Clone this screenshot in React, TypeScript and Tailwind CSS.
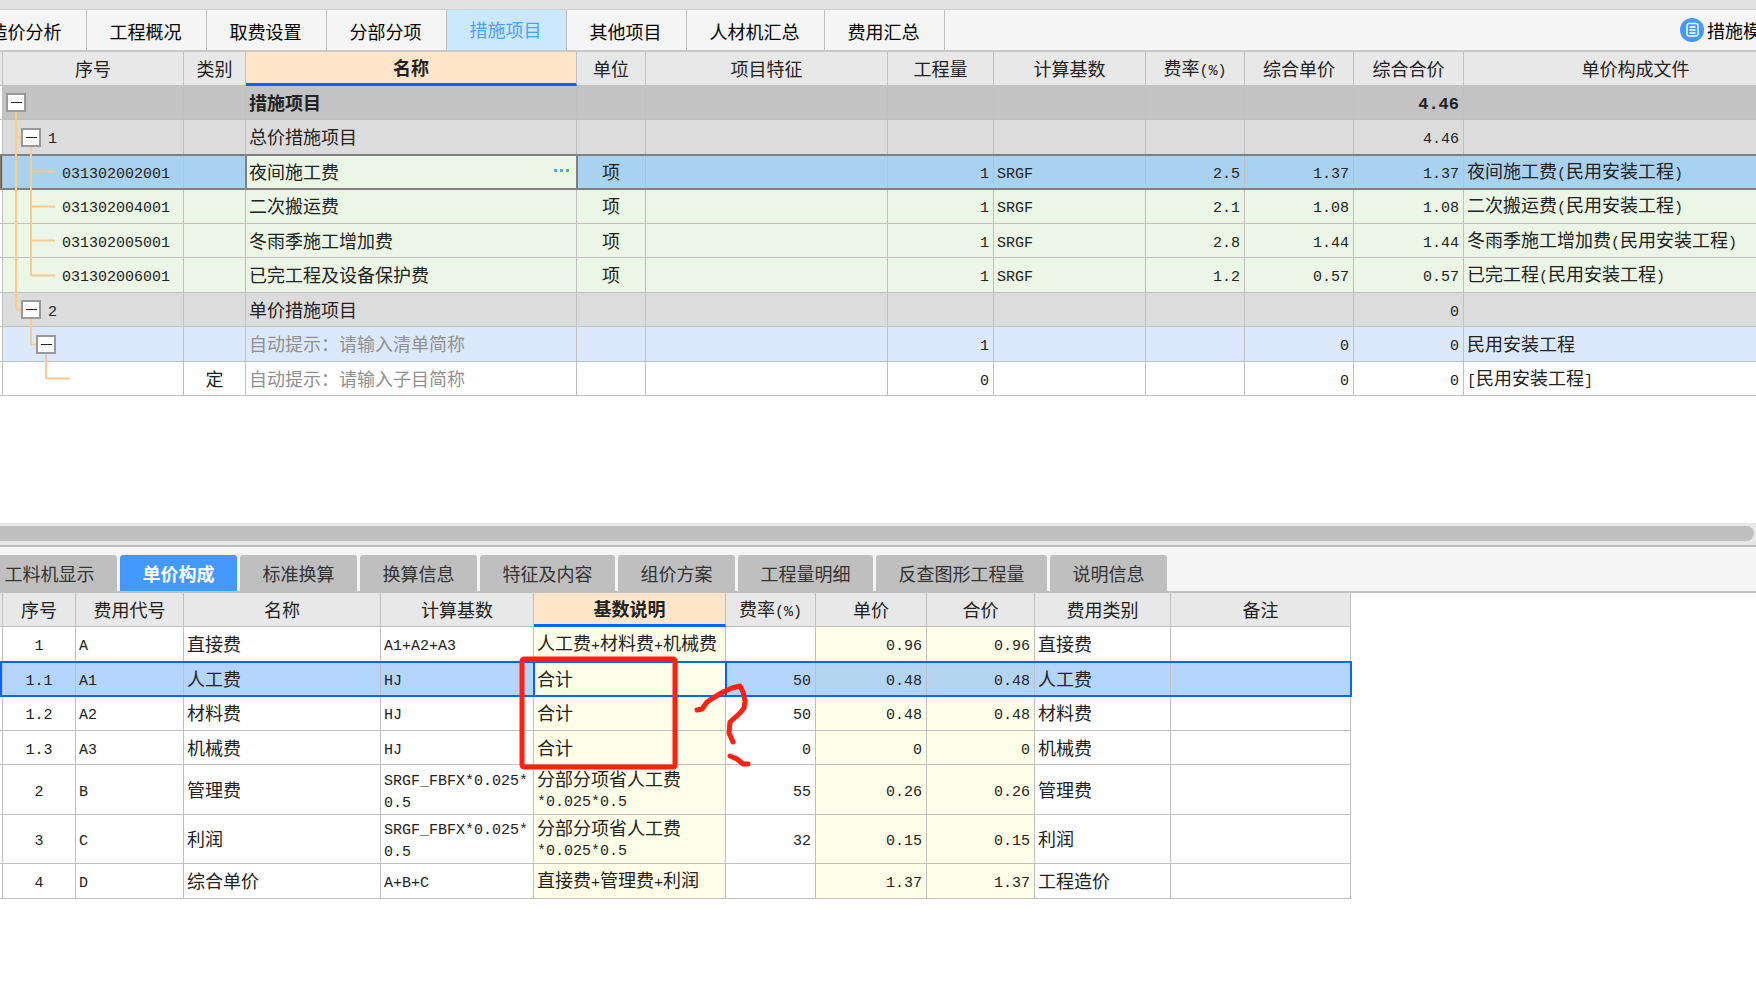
import { useState } from 'react';
import { clsx } from 'clsx';

type Line = { x: number; from: string; to: string };

type TreeSpec = {
    lines?: Line[];
    branch?: [number, number];
    box?: string;
    label?: string;
    pad?: string;
};

type MeasureRow = {
    tree: TreeSpec;
    kind?: string;
    name: string;
    hint?: boolean;
    unit?: string;
    qty?: string;
    base?: string;
    rate?: string;
    price?: string;
    total?: string;
    file?: string;
    tone: string;
    selected?: boolean;
    bold?: boolean;
};

type CostRow = {
    no: string;
    code: string;
    name: string;
    base: string;
    note: string;
    rate: string;
    price: string;
    total: string;
    type: string;
    height: string;
    selected?: boolean;
};

const MAIN_TABS = ['造价分析', '工程概况', '取费设置', '分部分项', '措施项目', '其他项目', '人材机汇总', '费用汇总'];
const DETAIL_TABS = ['工料机显示', '单价构成', '标准换算', '换算信息', '特征及内容', '组价方案', '工程量明细', '反查图形工程量', '说明信息'];

const MEASURE_COLS = [
    { title: '', width: 'w-[3px]' },
    { title: '序号', width: 'w-[181px]' },
    { title: '类别', width: 'w-[62px]' },
    { title: '名称', width: 'w-[331px]' },
    { title: '单位', width: 'w-[69px]' },
    { title: '项目特征', width: 'w-[242px]' },
    { title: '工程量', width: 'w-[106px]' },
    { title: '计算基数', width: 'w-[152px]' },
    { title: '费率(%)', width: 'w-[99px]' },
    { title: '综合单价', width: 'w-[109px]' },
    { title: '综合合价', width: 'w-[110px]' },
    { title: '单价构成文件', width: 'w-[344px]' },
];

const COST_COLS = [
    { title: '', width: 'w-[3px]' },
    { title: '序号', width: 'w-[73px]' },
    { title: '费用代号', width: 'w-[108px]' },
    { title: '名称', width: 'w-[197px]' },
    { title: '计算基数', width: 'w-[153px]' },
    { title: '基数说明', width: 'w-[192px]' },
    { title: '费率(%)', width: 'w-[90px]' },
    { title: '单价', width: 'w-[111px]' },
    { title: '合价', width: 'w-[108px]' },
    { title: '费用类别', width: 'w-[136px]' },
    { title: '备注', width: 'w-[180px]' },
];

const full = (x: number): Line => ({ x, from: '0%', to: '100%' });
const top = (x: number): Line => ({ x, from: '0%', to: '50%' });
const bottom = (x: number): Line => ({ x, from: '50%', to: '100%' });

const MEASURES: MeasureRow[] = [
    { tree: { lines: [bottom(13)], box: 'ml-[3px]' }, name: '措施项目', total: '4.46', tone: 'bg-[#c3c3c3]', bold: true },
    { tree: { lines: [full(13), bottom(28)], branch: [13, 20], box: 'ml-[18px]', label: '1' }, name: '总价措施项目', total: '4.46', tone: 'bg-[#dcdcdc]' },
    { tree: { lines: [full(13), full(28)], branch: [28, 52], label: '031302002001', pad: 'pl-[59px]' }, name: '夜间施工费', unit: '项', qty: '1', base: 'SRGF', rate: '2.5', price: '1.37', total: '1.37', file: '夜间施工费(民用安装工程)', tone: 'bg-[#a9d2f0]', selected: true },
    { tree: { lines: [full(13), full(28)], branch: [28, 52], label: '031302004001', pad: 'pl-[59px]' }, name: '二次搬运费', unit: '项', qty: '1', base: 'SRGF', rate: '2.1', price: '1.08', total: '1.08', file: '二次搬运费(民用安装工程)', tone: 'bg-[#ebf6e6]' },
    { tree: { lines: [full(13), full(28)], branch: [28, 52], label: '031302005001', pad: 'pl-[59px]' }, name: '冬雨季施工增加费', unit: '项', qty: '1', base: 'SRGF', rate: '2.8', price: '1.44', total: '1.44', file: '冬雨季施工增加费(民用安装工程)', tone: 'bg-[#ebf6e6]' },
    { tree: { lines: [full(13), top(28)], branch: [28, 52], label: '031302006001', pad: 'pl-[59px]' }, name: '已完工程及设备保护费', unit: '项', qty: '1', base: 'SRGF', rate: '1.2', price: '0.57', total: '0.57', file: '已完工程(民用安装工程)', tone: 'bg-[#ebf6e6]' },
    { tree: { lines: [top(13), bottom(28)], branch: [13, 20], box: 'ml-[18px]', label: '2' }, name: '单价措施项目', total: '0', tone: 'bg-[#dcdcdc]' },
    { tree: { lines: [top(28), bottom(43)], branch: [28, 35], box: 'ml-[33px]' }, name: '自动提示：请输入清单简称', hint: true, qty: '1', price: '0', total: '0', file: '民用安装工程', tone: 'bg-[#dce9fd]' },
    { tree: { lines: [top(43)], branch: [43, 67] }, kind: '定', name: '自动提示：请输入子目简称', hint: true, qty: '0', price: '0', total: '0', file: '[民用安装工程]', tone: 'bg-white' },
];

const COSTS: CostRow[] = [
    { no: '1', code: 'A', name: '直接费', base: 'A1+A2+A3', note: '人工费+材料费+机械费', rate: '', price: '0.96', total: '0.96', type: '直接费', height: 'h-[35px]' },
    { no: '1.1', code: 'A1', name: '人工费', base: 'HJ', note: '合计', rate: '50', price: '0.48', total: '0.48', type: '人工费', height: 'h-[34px]', selected: true },
    { no: '1.2', code: 'A2', name: '材料费', base: 'HJ', note: '合计', rate: '50', price: '0.48', total: '0.48', type: '材料费', height: 'h-[35px]' },
    { no: '1.3', code: 'A3', name: '机械费', base: 'HJ', note: '合计', rate: '0', price: '0', total: '0', type: '机械费', height: 'h-[34px]' },
    { no: '2', code: 'B', name: '管理费', base: 'SRGF_FBFX*0.025*\n0.5', note: '分部分项省人工费\n*0.025*0.5', rate: '55', price: '0.26', total: '0.26', type: '管理费', height: 'h-[50px]' },
    { no: '3', code: 'C', name: '利润', base: 'SRGF_FBFX*0.025*\n0.5', note: '分部分项省人工费\n*0.025*0.5', rate: '32', price: '0.15', total: '0.15', type: '利润', height: 'h-[49px]' },
    { no: '4', code: 'D', name: '综合单价', base: 'A+B+C', note: '直接费+管理费+利润', rate: '', price: '1.37', total: '1.37', type: '工程造价', height: 'h-[35px]' },
];

// Half-width characters take exactly half of a full-width one
function Mixed({ text, large }: { text: string; large?: boolean }) {
    const parts = text.split(/([\x20-\x7e]+)/).filter(Boolean);
    return (
        <>
            {parts.map((part, i) =>
                /^[\x20-\x7e]/.test(part) ? (
                    <span
                        key={i}
                        className={clsx("font-['Liberation_Mono',monospace] leading-none", large ? 'text-[17px]' : 'text-[15px]')}
                    >
                        {part}
                    </span>
                ) : (
                    <span key={i}>{part}</span>
                )
            )}
        </>
    );
}

function TreeCell({ tree }: { tree: TreeSpec }) {
    return (
        <div className={clsx('relative flex h-[33px] items-center', tree.pad)}>
            <svg className="absolute inset-x-0 -top-px h-[35px] w-full" stroke="#fbcb8b" strokeWidth="2" aria-hidden="true">
                {tree.lines?.map((l) => (
                    <line key={l.x} x1={l.x} x2={l.x} y1={l.from} y2={l.to} />
                ))}
                {tree.branch && <line x1={tree.branch[0]} x2={tree.branch[1]} y1="50%" y2="50%" />}
            </svg>
            {tree.box && (
                <button
                    aria-label="折叠"
                    className={clsx('relative flex h-[19px] w-5 items-center justify-center border-2 border-[#999] bg-white', tree.box)}
                >
                    <span className="h-px w-[11px] bg-[#222]" />
                </button>
            )}
            {tree.label && (
                <span className={clsx('relative pb-[2px]', tree.box && 'ml-[7px]')}>
                    <Mixed text={tree.label} />
                </span>
            )}
        </div>
    );
}

function HeadRow({ cols, active }: { cols: { title: string; width: string }[]; active: string }) {
    return (
        <tr className="h-[34px]">
            {cols.map((col, i) => (
                <th
                    key={i}
                    className={clsx(
                        'border-r border-[#c0c0c0] px-0 pt-0 pb-[2px] text-center',
                        col.width,
                        col.title === active
                            ? 'border-b-[3px] border-b-[#0066ff] bg-[#ffe6c8] font-bold'
                            : 'border-b bg-[#e8e8e8] font-normal'
                    )}
                >
                    <Mixed text={col.title} />
                </th>
            ))}
        </tr>
    );
}

function MeasureTable() {
    const line = 'border-r border-b border-[#c0c0c0] whitespace-nowrap';
    const cell = clsx(line, 'pt-0 pb-[2px]');
    return (
        <table className="w-[1808px] table-fixed border-separate border-spacing-0 leading-5">
            <thead>
                <HeadRow cols={MEASURE_COLS} active="名称" />
            </thead>
            <tbody>
                {MEASURES.map((row, i) => (
                    <tr
                        key={i}
                        className={clsx(
                            'odd:h-[34px] even:h-[35px]',
                            row.tone,
                            row.bold && 'font-bold',
                            row.selected && 'outline-2 -outline-offset-1 outline-[#808080]'
                        )}
                    >
                        <td className={clsx(line, 'p-0', row.selected ? 'bg-[#0066ff]' : 'bg-white')} />
                        <td className={clsx(line, 'p-0')}><TreeCell tree={row.tree} /></td>
                        <td className={clsx(cell, 'px-0 text-center')}>{row.kind}</td>
                        {row.selected ? (
                            <td className="border-r border-b border-[#808080] bg-[#ebf6e6] px-[3px] pt-0 pb-[2px] outline-2 -outline-offset-1 outline-[#808080]">
                                <div className="flex items-center">
                                    <input aria-label="名称" defaultValue={row.name} className="h-5 min-w-0 flex-1 bg-transparent leading-5 outline-none" />
                                    <button aria-label="更多" className="flex gap-[3px] px-1">
                                        <span className="h-[3px] w-[3px] bg-[#62a5dc]" />
                                        <span className="h-[3px] w-[3px] bg-[#62a5dc]" />
                                        <span className="h-[3px] w-[3px] bg-[#62a5dc]" />
                                    </button>
                                </div>
                            </td>
                        ) : (
                            <td className={clsx(cell, 'px-[3px]', row.hint && 'text-[#909090]')}>{row.name}</td>
                        )}
                        <td className={clsx(cell, 'px-0 text-center')}>{row.unit}</td>
                        <td className={cell} />
                        <td className={clsx(cell, 'px-1 text-right')}><Mixed text={row.qty ?? ''} /></td>
                        <td className={clsx(cell, 'px-[3px]')}><Mixed text={row.base ?? ''} /></td>
                        <td className={clsx(cell, 'px-1 text-right')}><Mixed text={row.rate ?? ''} /></td>
                        <td className={clsx(cell, 'px-1 text-right')}><Mixed text={row.price ?? ''} /></td>
                        <td className={clsx(cell, 'px-1 text-right')}><Mixed text={row.total ?? ''} large={row.bold} /></td>
                        <td className={clsx(cell, 'px-[3px]')}><Mixed text={row.file ?? ''} /></td>
                    </tr>
                ))}
            </tbody>
        </table>
    );
}

function CostTable() {
    const cell = 'border-r border-b border-[#c0c0c0] pt-0 pb-[2px] whitespace-pre';
    return (
        <table className="w-[1351px] table-fixed border-separate border-spacing-0 leading-5">
            <thead>
                <HeadRow cols={COST_COLS} active="基数说明" />
            </thead>
            <tbody>
                {COSTS.map((row) => {
                    const money = row.selected ? 'bg-[#b3d5f2]' : 'bg-[#ffffe9]';
                    return (
                        <tr
                            key={row.no}
                            className={clsx(row.height, row.selected && 'bg-[#b3d5ff] outline-2 -outline-offset-1 outline-[#0066ff]')}
                        >
                            <td className={clsx(cell, 'px-0', row.selected && 'bg-[#0066ff]')} />
                            <td className={clsx(cell, 'px-0 text-center')}><Mixed text={row.no} /></td>
                            <td className={clsx(cell, 'px-[3px]')}><Mixed text={row.code} /></td>
                            <td className={clsx(cell, 'px-[3px]')}>{row.name}</td>
                            <td className={clsx(cell, 'px-[3px]')}><Mixed text={row.base} /></td>
                            <td className={clsx(cell, 'bg-[#ffffe9] px-[3px]', row.selected && 'outline-2 -outline-offset-1 outline-[#0066ff]')}>
                                <Mixed text={row.note} />
                            </td>
                            <td className={clsx(cell, 'px-1 text-right')}><Mixed text={row.rate} /></td>
                            <td className={clsx(cell, 'px-1 text-right', money)}><Mixed text={row.price} /></td>
                            <td className={clsx(cell, 'px-1 text-right', money)}><Mixed text={row.total} /></td>
                            <td className={clsx(cell, 'px-[3px]')}>{row.type}</td>
                            <td className={cell} />
                        </tr>
                    );
                })}
            </tbody>
        </table>
    );
}

// Red pen marks laid over the cost table
function PenMarks() {
    return (
        <svg
            className="pointer-events-none absolute top-[60px] left-[518px]"
            width="240"
            height="120"
            fill="none"
            stroke="#ff2010"
            strokeWidth="5"
            strokeLinecap="round"
            strokeLinejoin="round"
            aria-hidden="true"
        >
            <rect x="4" y="6" width="153" height="108" rx="2" />
            <path d="M179 57 L184 56 L189 49 L195 45 L205 39 L214 35 L222 33 L225 39 L227 48 L226 55 L222 60 L212 69 L211 80 L215 89" />
            <path d="M212 103 L219 106 L225 111 L230 111" />
        </svg>
    );
}

export default function App() {
    const [mainTab, setMainTab] = useState('措施项目');
    const [detailTab, setDetailTab] = useState('单价构成');

    return (
        <div className="flex min-h-screen flex-col overflow-hidden bg-white font-['Noto_Sans_CJK_SC',sans-serif] text-[18px] text-[#222]">
            <div className="h-[10px] border-b border-[#d0d0d0] bg-[#e1e1e1]" />
            <header className="flex h-[42px] justify-between overflow-hidden border-b-2 border-[#c8c8c8] bg-[#f5f5f5]">
                <nav className="-ml-[33px] flex">
                    {MAIN_TABS.map((tab) => (
                        <button
                            key={tab}
                            onClick={() => setMainTab(tab)}
                            className={clsx(
                                'shrink-0 border-r border-[#c0c0c0] pr-[2px] leading-5 whitespace-nowrap',
                                tab.length > 4 ? 'w-[138px]' : 'w-[120px]',
                                tab === mainTab ? 'bg-[#cce8ff] pb-[2px] text-[#4f9fff]' : 'pt-[2px] text-black'
                            )}
                        >
                            {tab}
                        </button>
                    ))}
                </nav>
                <button className="flex w-[76px] shrink-0 items-center gap-[3px] overflow-hidden whitespace-nowrap text-black">
                    <svg className="shrink-0" width="24" height="24" viewBox="0 0 24 24" fill="none" stroke="#fff" aria-hidden="true">
                        <circle cx="12" cy="12" r="12" fill="#4499ff" stroke="none" />
                        <rect x="7" y="5.5" width="11" height="12.5" rx="2" strokeWidth="1.4" />
                        <path d="M9.5 9h6M9.5 12h6M9.5 15h6" strokeWidth="1.3" />
                    </svg>
                    <span className="leading-5">措施模板</span>
                </button>
            </header>

            <section className="overflow-hidden pb-[127px]">
                <MeasureTable />
            </section>

            <div className="border-b-2 border-[#bfbfbf] bg-[#e8e8e8] pt-[3px] pr-[2px] pb-[4px]">
                <div className="h-[15px] rounded-r-full bg-[#bfbfbf]" />
            </div>

            <section>
                <nav className="-ml-[18px] flex gap-[3px] border-b-2 border-[#c0c0c0] bg-[#f5f5f5] pt-2">
                    {DETAIL_TABS.map((tab) => (
                        <button
                            key={tab}
                            onClick={() => setDetailTab(tab)}
                            className={clsx(
                                'h-[36px] shrink-0 rounded-t-[3px] pb-px leading-5 whitespace-nowrap',
                                tab.length === 4 && 'w-[117px]',
                                tab.length === 5 && 'w-[135px]',
                                tab.length === 7 && 'w-[171px]',
                                tab === detailTab ? 'bg-[#4499ff] font-bold text-white' : 'bg-[#bfbfbf] text-[#333]'
                            )}
                        >
                            {tab}
                        </button>
                    ))}
                </nav>
                <div className="relative">
                    <CostTable />
                    <PenMarks />
                </div>
            </section>
        </div>
    );
}
